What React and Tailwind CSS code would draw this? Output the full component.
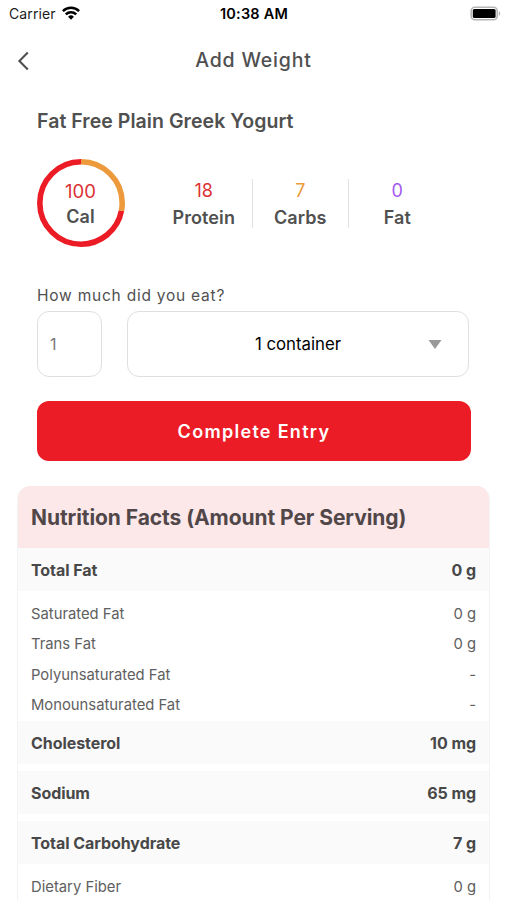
const macros = [
  { label: "Protein", value: 18, color: "text-[#dc3136]" },
  { label: "Carbs", value: 7, color: "text-[#ec9a3c]" },
  { label: "Fat", value: 0, color: "text-[#a259f0]" },
];

const nutrition = [
  {
    label: "Total Fat",
    value: "0 g",
    items: [
      { label: "Saturated Fat", value: "0 g" },
      { label: "Trans Fat", value: "0 g" },
      { label: "Polyunsaturated Fat", value: "-" },
      { label: "Monounsaturated Fat", value: "-" },
    ],
  },
  { label: "Cholesterol", value: "10 mg", items: [] },
  { label: "Sodium", value: "65 mg", items: [] },
  {
    label: "Total Carbohydrate",
    value: "7 g",
    items: [{ label: "Dietary Fiber", value: "0 g" }],
  },
];

function StatusBar() {
  return (
    <div className="grid h-7 grid-cols-3 items-center pl-[7px] pr-[6px] text-[14px] text-[#1c1c1c]">
      <div className="-mt-[2px] flex items-center gap-[6px] pl-[2px]">
        <span className="tracking-[0.1px]">Carrier</span>
        <svg className="h-[14px] w-[18px]" viewBox="0 0 18 14" fill="none" stroke="#000" strokeWidth="2.5">
          <path d="M0.9 5.1a11.6 11.6 0 0 1 16.2 0" />
          <path d="M3.8 8.3a7.4 7.4 0 0 1 10.4 0" />
          <path d="M9 13.7 6.1 10.8a4.1 4.1 0 0 1 5.8 0z" fill="#000" stroke="none" />
        </svg>
      </div>
      <span className="text-center text-[14.5px] font-semibold tracking-[0.2px] text-black">10:38 AM</span>
      <div className="-mt-[2px] flex justify-end">
        <svg className="h-[15px] w-[31px]" viewBox="0 0 31 15">
          <rect x="1.2" y="1.2" width="26" height="12.6" rx="3.6" fill="#fff" stroke="#b5b5b5" strokeWidth="1.6" />
          <rect x="2.8" y="3" width="22.8" height="9" rx="1.6" fill="#000" />
          <path d="M28.8 5.2c1.9.7 1.9 3.9 0 4.6z" fill="#b5b5b5" />
        </svg>
      </div>
    </div>
  );
}

function CalorieRing() {
  // radius 41.2 -> circumference 258.9, carbs take 28% of it
  return (
    <div className="relative size-[88px]">
      <svg className="size-full -rotate-90" viewBox="0 0 88 88" fill="none" strokeWidth="5.6">
        <circle cx="44" cy="44" r="41.2" stroke="#ec1c26" strokeDasharray="186.4 258.9" strokeDashoffset="-72.5" />
        <circle cx="44" cy="44" r="41.2" stroke="#ec9a3c" strokeDasharray="72.5 258.9" />
      </svg>
      <div className="absolute inset-0 flex flex-col items-center justify-center pt-[2px] pr-px text-[18.5px] leading-[25px]">
        <span className="text-[#dc3136]">100</span>
        <span className="text-[18px] font-semibold">Cal</span>
      </div>
    </div>
  );
}

function NutritionCard() {
  return (
    <section className="mx-[17px] mt-[25px] overflow-hidden rounded-t-[13px] border-x border-[#f3f3f3]">
      <h2 className="flex h-[62px] items-center bg-[#fce8e9] px-[13px] pt-px text-[21px] font-bold tracking-[-0.07px] text-[#514749]">
        Nutrition Facts (Amount Per Serving)
      </h2>
      {nutrition.map((group) => (
        <div key={group.label}>
          <div className="flex h-[43px] items-center justify-between bg-[#fafafa] px-[13px] pt-px text-[16px] font-bold tracking-[-0.06px] text-[#484848]">
            <span>{group.label}</span>
            <span>{group.value}</span>
          </div>
          {group.items.length === 0 && <div className="h-[7px]" />}
          {group.items.length > 0 && (
            <div className="pt-[8px]">
              {group.items.map((item) => (
                <div key={item.label} className="flex h-[30.4px] items-center justify-between px-[13px] text-[14.8px] text-[#606060]">
                  <span>{item.label}</span>
                  <span>{item.value}</span>
                </div>
              ))}
            </div>
          )}
        </div>
      ))}
    </section>
  );
}

export default function App() {
  return (
    <div className="h-[900px] overflow-hidden bg-white font-['Inter',sans-serif] text-[#505050]">
      <StatusBar />

      <header className="grid h-[65px] grid-cols-3 items-center px-[17px]">
        <svg className="h-[20px] w-[12px]" viewBox="0 0 12 20" fill="none" stroke="#505050" strokeWidth="2.1">
          <path d="M10.8 1.4 2.4 10l8.4 8.6" />
        </svg>
        <h1 className="pt-px text-center text-[19.5px] font-medium tracking-[0.8px] whitespace-nowrap">Add Weight</h1>
      </header>

      <main>
        <div className="px-[37px]">
          <h2 className="pt-[14px] text-[19.5px] leading-[28px] font-semibold tracking-[0.05px]">Fat Free Plain Greek Yogurt</h2>

          <div className="mt-[24px] flex items-center">
            <CalorieRing />
            <div className="ml-[31px] flex divide-x divide-[#e2e2e2]">
              {macros.map((macro) => (
                <div key={macro.label} className="flex h-[49px] w-[96.5px] flex-col items-center text-[18px] leading-[27px]">
                  <span className={`-mt-[2px] ${macro.color}`}>{macro.value}</span>
                  <span className="font-semibold tracking-[0.1px]">{macro.label}</span>
                </div>
              ))}
            </div>
          </div>

          <label className="mt-[37px] block text-[15.5px] leading-[23px] tracking-[0.77px]">How much did you eat?</label>
          <div className="mt-[4px] flex gap-[25px]">
            <div className="flex h-[66px] w-[65px] items-center rounded-[12px] border border-[#dfdfdf] pl-3 text-[16px] text-[#777]">1</div>
            <div className="relative flex h-[66px] w-[342px] items-center justify-center rounded-[12px] border border-[#dfdfdf] pt-[2px] text-[16.8px] text-black">
              1 container
              <svg className="absolute top-[28px] right-[26px] h-[9px] w-[14px]" viewBox="0 0 14 9">
                <path d="M.5 0h13L7 9z" fill="#999" />
              </svg>
            </div>
          </div>

          <button className="mt-[24px] block h-[60px] w-[434px] rounded-[12px] bg-[#ec1c26] text-[18px] font-semibold tracking-[1.3px] text-white">
            Complete Entry
          </button>
        </div>

        <NutritionCard />
      </main>
    </div>
  );
}
